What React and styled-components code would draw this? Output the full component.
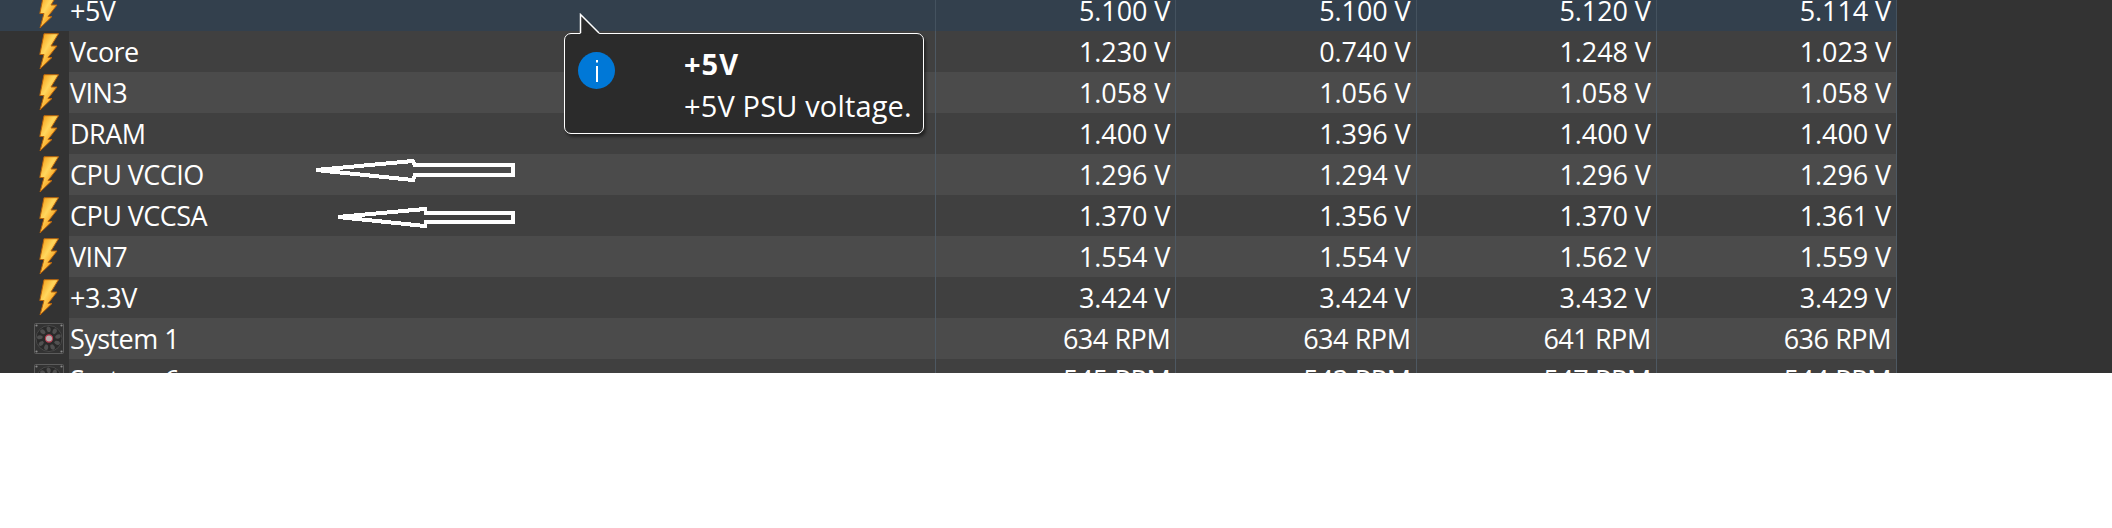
import React from "react";
import styled, { createGlobalStyle } from "styled-components";

const rows = [
  { name: "+5V", icon: "volt", values: ["5.100 V", "5.100 V", "5.120 V", "5.114 V"], selected: true },
  { name: "Vcore", icon: "volt", values: ["1.230 V", "0.740 V", "1.248 V", "1.023 V"] },
  { name: "VIN3", icon: "volt", values: ["1.058 V", "1.056 V", "1.058 V", "1.058 V"] },
  { name: "DRAM", icon: "volt", values: ["1.400 V", "1.396 V", "1.400 V", "1.400 V"] },
  { name: "CPU VCCIO", icon: "volt", values: ["1.296 V", "1.294 V", "1.296 V", "1.296 V"] },
  { name: "CPU VCCSA", icon: "volt", values: ["1.370 V", "1.356 V", "1.370 V", "1.361 V"] },
  { name: "VIN7", icon: "volt", values: ["1.554 V", "1.554 V", "1.562 V", "1.559 V"] },
  { name: "+3.3V", icon: "volt", values: ["3.424 V", "3.424 V", "3.432 V", "3.429 V"] },
  { name: "System 1", icon: "fan", values: ["634 RPM", "634 RPM", "641 RPM", "636 RPM"] },
  { name: "System 6", icon: "fan", values: ["545 RPM", "543 RPM", "547 RPM", "544 RPM"] },
];

const GlobalStyle = createGlobalStyle`
  html, body {
    margin: 0;
    background: #fff;
  }
`;

const Page = styled.div`
  position: relative;
  width: 2112px;
  height: 528px;
  overflow: hidden;
`;

const Viewport = styled.div`
  height: 373px;
  overflow: hidden;
  background: #333;
  font-family: "Open Sans", "Noto Sans", sans-serif;
  color: #fff;
`;

const Table = styled.div`
  width: 1897px;
  margin-top: -10px;
`;

const Row = styled.div`
  display: grid;
  grid-template-columns: 69px 867px repeat(4, 240.25px);
  height: 41px;
`;

const IconCell = styled.div`
  display: flex;
  justify-content: flex-end;
  align-items: center;
  padding-right: ${(p) => (p.$fan ? "5px" : "10px")};
  background: ${(p) => (p.$selected ? "#33404d" : "#333")};
`;

const NameCell = styled.div`
  display: flex;
  align-items: center;
  padding-left: 1px;
  font-size: 27px;
  letter-spacing: -0.55px;
  white-space: nowrap;
  background: ${(p) => (p.$selected ? "#33404d" : p.$odd ? "#4b4b4b" : "#404040")};
  border-right: 1.5px solid ${(p) => (p.$selected ? "#44525f" : "#4d5862")};
`;

const ValueCell = styled(NameCell)`
  justify-content: flex-end;
  padding: 0 5px 0 0;
  letter-spacing: ${(p) => (p.$rpm ? "-0.45px" : "-0.1px")};
`;

const Arrows = styled.svg`
  position: absolute;
  left: 0;
  top: 0;
  width: 600px;
  height: 240px;
  pointer-events: none;
`;

const Tooltip = styled.div`
  position: absolute;
  left: 564px;
  top: 33px;
  box-sizing: border-box;
  width: 360px;
  height: 101px;
  display: flex;
  background: #2b2b2b;
  border: 1.5px solid #fff;
  border-radius: 7px;
  box-shadow: 2px 3px 3px rgba(0, 0, 0, 0.45);
  font-family: "Open Sans", "Noto Sans", sans-serif;
  color: #fff;
`;

const Tail = styled.svg`
  position: absolute;
  left: 14px;
  top: -21px;
  width: 22px;
  height: 23px;
`;

const InfoBadge = styled.div`
  flex: none;
  width: 37px;
  height: 37px;
  margin: 18px 0 0 13px;
  border-radius: 50%;
  background: #0078d7;
  display: flex;
  align-items: center;
  justify-content: center;
`;

const TooltipText = styled.div`
  margin-left: 69px;
  padding-top: 9px;
  white-space: nowrap;
`;

const TooltipTitle = styled.div`
  font-size: 29px;
  font-weight: 700;
  line-height: 42px;
  letter-spacing: 1px;
`;

const TooltipBody = styled.div`
  font-size: 29px;
  line-height: 42px;
  letter-spacing: 0.15px;
`;

const Bolt = () => (
  <svg width="20" height="37" viewBox="0 0 20 37">
    <defs>
      <linearGradient id="boltFill" x1="0.1" y1="0" x2="0.8" y2="0.8">
        <stop offset="0" stopColor="#f59a12" />
        <stop offset="0.45" stopColor="#ffd75e" />
        <stop offset="1" stopColor="#f88c06" />
      </linearGradient>
    </defs>
    <path
      d="M5 .7H19.500L12 13H18L9 24.500H13L1 36L5 21.500H.8Z"
      fill="url(#boltFill)"
      stroke="#b8640c"
      strokeWidth="1"
      strokeLinejoin="round"
    />
  </svg>
);

const bladeAngles = [0, 40, 80, 120, 160, 200, 240, 280, 320];

const Fan = () => (
  <svg width="30" height="31" viewBox="0 0 30 31">
    <rect x=".5" y=".5" width="29" height="30" rx="1" fill="#333" stroke="#5c5c5c" />
    <circle cx="15" cy="15.500" r="13" fill="#2a2a2a" stroke="#484848" />
    {bladeAngles.map((a) => (
      <path
        key={a}
        d="M14 9C12 7 12 4 14 3.500C16.500 3.500 17.500 6 16 9Z"
        fill="#505050"
        transform={`rotate(${a} 15 15.500)`}
      />
    ))}
    <circle cx="15" cy="15.500" r="3.600" fill="#b5adad" stroke="#b83a4e" strokeWidth="1.100" />
    {[[2.5, 2.5], [27.5, 2.5], [2.5, 28.5], [27.5, 28.5]].map(([x, y]) => (
      <circle key={x + "-" + y} cx={x} cy={y} r="1.100" fill="#8a8a8a" />
    ))}
  </svg>
);

const App = () => {
  return (
    <Page>
      <GlobalStyle />
      <Viewport>
        <Table>
          {rows.map((row, i) => (
            <Row key={row.name}>
              <IconCell $selected={row.selected} $fan={row.icon === "fan"}>
                {row.icon === "fan" ? <Fan /> : <Bolt />}
              </IconCell>
              <NameCell $selected={row.selected} $odd={i % 2 === 0}>
                {row.name}
              </NameCell>
              {row.values.map((v, j) => (
                <ValueCell
                  key={j}
                  $selected={row.selected}
                  $odd={i % 2 === 0}
                  $rpm={row.icon === "fan"}
                >
                  {v}
                </ValueCell>
              ))}
            </Row>
          ))}
        </Table>
      </Viewport>

      <Arrows viewBox="0 0 600 240">
        <g fill="none" stroke="#fff" strokeWidth="4" shapeRendering="crispEdges">
          <path d="M316 170L413 161L415 165H513V175H415L413 180Z" />
          <path d="M338 217L425 209L426 213H513V222H426L425 226Z" />
        </g>
      </Arrows>

      <Tooltip>
        <Tail viewBox="0 0 22 23">
          <path d="M1.500 21.500V1.500L21 21.500Z" fill="#2b2b2b" />
          <path d="M1.500 20V1.500L20 20" fill="none" stroke="#fff" strokeWidth="1.500" />
        </Tail>
        <InfoBadge>
          <svg width="4" height="22" viewBox="0 0 4 22">
            <rect x="1" y="0" width="2" height="2.500" fill="#fff" />
            <rect x="1" y="6" width="2" height="16" fill="#fff" />
          </svg>
        </InfoBadge>
        <TooltipText>
          <TooltipTitle>+5V</TooltipTitle>
          <TooltipBody>+5V PSU voltage.</TooltipBody>
        </TooltipText>
      </Tooltip>
    </Page>
  );
};

export default App;
